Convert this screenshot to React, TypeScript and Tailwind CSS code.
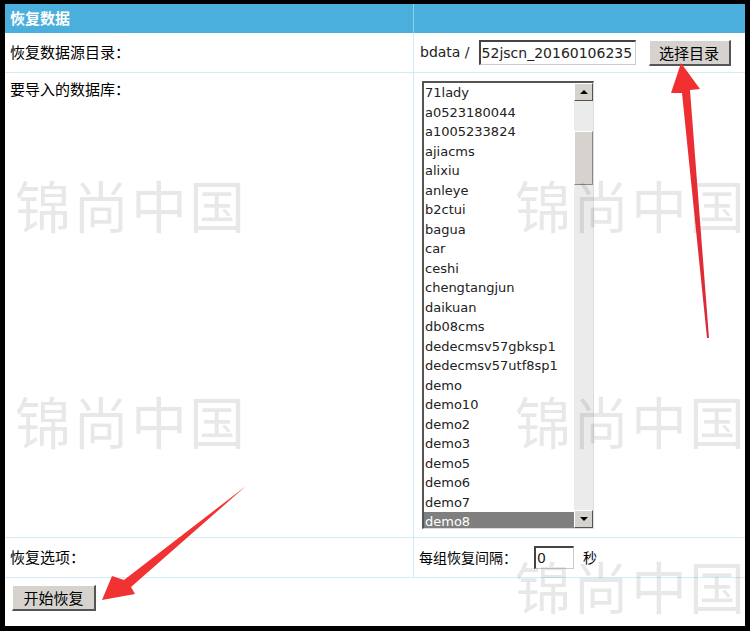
import React from 'react';

const dbs = [
  '71lady', 'a0523180044', 'a1005233824', 'ajiacms', 'alixiu', 'anleye', 'b2ctui', 'bagua', 'car', 'ceshi',
  'chengtangjun', 'daikuan', 'db08cms', 'dedecmsv57gbksp1', 'dedecmsv57utf8sp1', 'demo', 'demo10', 'demo2',
  'demo3', 'demo5', 'demo6', 'demo7', 'demo8',
];

const cjk = "font-['Noto_Sans_CJK_SC',sans-serif]";
const tahoma = "font-['DejaVu_Sans','Noto_Sans_CJK_SC',sans-serif]";

const Watermark: React.FC<{ className: string }> = ({ className }) => (
  <div className={`absolute ${cjk} text-[56px] leading-none tracking-[2px] whitespace-nowrap text-black/[0.09] select-none pointer-events-none ${className}`}>
    锦尚中国
  </div>
);

const Win98Button: React.FC<{ label: string; className?: string }> = ({ label, className }) => (
  <button
    className={`h-[26px] bg-[#d6d3ce] border-t border-l border-white border-r-2 border-b-2 border-r-[#555] border-b-[#555] text-[15px] text-black ${cjk} leading-none ${className ?? ''}`}
  >
    {label}
  </button>
);

const App: React.FC = () => {
  return (
    <div className="w-[750px] h-[631px] bg-black pt-[4px] pl-[5px] pr-[5px] pb-[5px]">
      <div className="relative w-[740px] h-[622px] bg-white overflow-hidden">
        <div className={`relative grid grid-cols-[409px_1fr] ${cjk} text-[15px] text-black`}>
          {/* header */}
          <div className="h-[29px] bg-[#4aafdc] border-r border-[#8fd0ee] flex items-center pl-[5px] font-bold text-white">恢复数据</div>
          <div className="h-[29px] bg-[#4aafdc]" />

          {/* source dir */}
          <div className="h-[40px] border-b border-r border-[#d4ebf7] flex items-center pl-[5px]">恢复数据源目录：</div>
          <div className="h-[40px] border-b border-[#d4ebf7] flex items-center pl-[6px]">
            <span className={`${tahoma} text-[14px] text-[#222]`}>bdata /</span>
            <div className={`ml-[9px] w-[157px] h-[25px] border-t-2 border-l-2 border-[#444] border-r border-b border-r-[#ccc] border-b-[#ccc] ${tahoma} text-[14px] leading-[22px] pl-[1px] overflow-hidden whitespace-nowrap text-[#222]`}>
              52jscn_20160106235
            </div>
            <Win98Button label="选择目录" className="ml-[13px] w-[82px]" />
          </div>

          {/* database list */}
          <div className="h-[465px] border-b border-r border-[#d4ebf7] pl-[5px] pt-[5px]">要导入的数据库：</div>
          <div className="h-[465px] border-b border-[#d4ebf7] pl-[8px] pt-[8px]">
            <div className="relative w-[172px] h-[448px] border-t-2 border-l-2 border-[#555] border-r border-b border-r-[#ddd] border-b-[#ddd] flex overflow-hidden bg-white">
              <div className={`flex-1 ${tahoma} text-[13px] text-[#222]`}>
                {dbs.map((d) => (
                  <div
                    key={d}
                    className={`h-[19.5px] leading-[19.5px] pl-[1px] whitespace-nowrap ${d === 'demo8' ? 'bg-[#7f7f7f] text-white' : ''}`}
                  >
                    {d}
                  </div>
                ))}
              </div>
              <div className="w-[19px] bg-[#ebebeb] flex flex-col justify-between">
                <div className="relative flex-1">
                  <div className="h-[18px] bg-[#d6d3ce] border-t border-l border-white border-r border-b border-r-[#555] border-b-[#555] flex items-center justify-center">
                    <span className="w-0 h-0 border-l-[4px] border-r-[4px] border-b-[4px] border-l-transparent border-r-transparent border-b-black" />
                  </div>
                  <div className="absolute left-0 top-[48px] w-full h-[54px] bg-[#d6d3ce] border-t border-l border-white border-r border-b border-r-[#888] border-b-[#888]" />
                </div>
                <div className="h-[18px] bg-[#d6d3ce] border-t border-l border-white border-r border-b border-r-[#555] border-b-[#555] flex items-center justify-center">
                  <span className="w-0 h-0 border-l-[4px] border-r-[4px] border-t-[4px] border-l-transparent border-r-transparent border-t-black" />
                </div>
              </div>
            </div>
          </div>

          {/* options */}
          <div className="h-[40px] border-b border-r border-[#d4ebf7] flex items-center pl-[5px]">恢复选项：</div>
          <div className="h-[40px] border-b border-[#d4ebf7] flex items-center pl-[5px]">
            <span className="text-[14px]">每组恢复间隔：</span>
            <div className={`ml-[17px] w-[40px] h-[23px] border-t-2 border-l-2 border-[#444] border-r border-b border-r-[#ccc] border-b-[#ccc] ${tahoma} text-[14px] leading-[20px] pl-[1px] text-[#222]`}>
              0
            </div>
            <span className="ml-[9px] text-[14px]">秒</span>
          </div>

          {/* submit */}
          <div className="col-span-2 h-[48px] pl-[7px] pt-[7px]">
            <Win98Button label="开始恢复" className="w-[84px]" />
          </div>
        </div>

        {/* watermarks */}
        <Watermark className="left-[10px] top-[172px]" />
        <Watermark className="left-[10px] top-[388px]" />
        <Watermark className="left-[510px] top-[172px]" />
        <Watermark className="left-[510px] top-[388px]" />
        <Watermark className="left-[510px] top-[553px]" />

        {/* arrows */}
        <svg className="absolute left-[-5px] top-[-4px] pointer-events-none" width="750" height="631" viewBox="0 0 750 631">
          <defs>
            <linearGradient id="a1" x1="0" y1="0" x2="0" y2="1">
              <stop offset="0" stopColor="#f23030" />
              <stop offset="1" stopColor="#d82a3a" />
            </linearGradient>
          </defs>
          <polygon points="681,63 700,89 690,90 709,338 707,338 682,93 671,93" fill="url(#a1)" />
          <polygon points="102,600 112,576 124,580 246,486 131,587 135,594" fill="#f03232" />
        </svg>
      </div>
    </div>
  );
};

export default App;
